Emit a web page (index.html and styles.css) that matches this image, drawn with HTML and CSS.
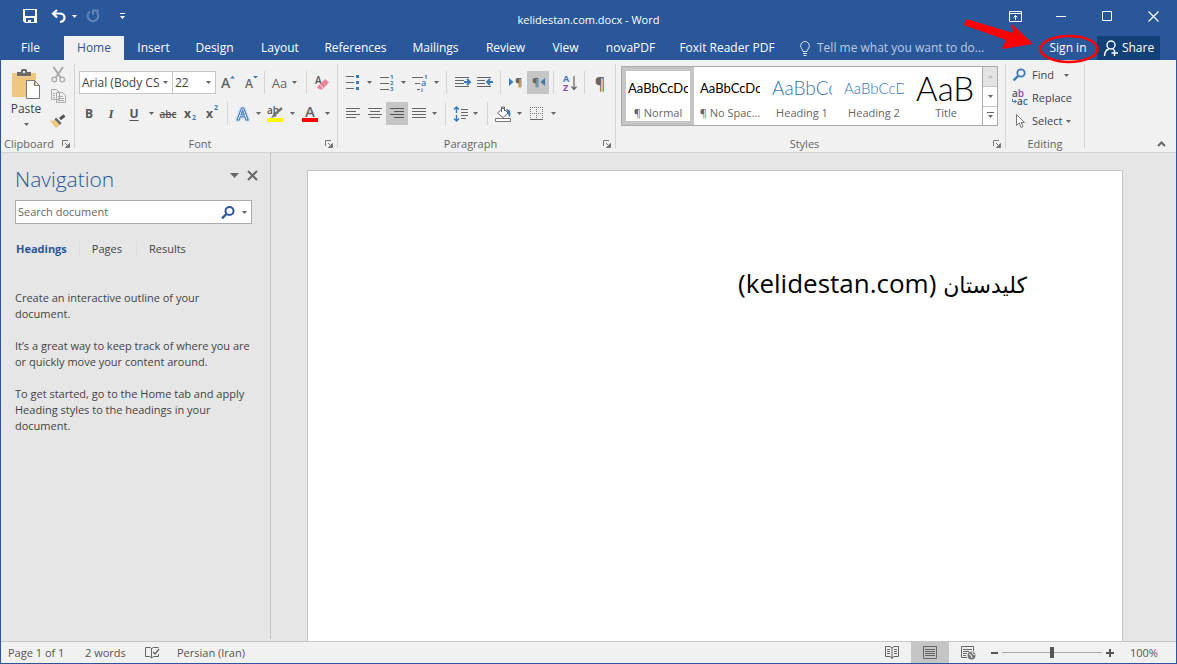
FILE: index.html
```html
<!DOCTYPE html>
<html lang="en">
<head>
<meta charset="utf-8">
<title>kelidestan.com.docx - Word</title>
<link rel="stylesheet" href="styles.css">
</head>
<body>
<svg class="defs" aria-hidden="true">
  <symbol id="down" viewBox="0 0 5 3"><path d="M0 0h5L2.500 3z" fill="currentColor"/></symbol>
  <symbol id="launch" viewBox="0 0 8 8"><path d="M.5 6V.5H6M3 3l3 3M7.500 3.500v4h-4z" fill="none" stroke="#777"/><path d="M7.500 3.500v4h-4z" fill="#777"/></symbol>
</svg>
<div class="window">
  <header class="chrome">
    <div class="titlebar">
      <div class="quick">
        <button aria-label="Save"><svg width="14" height="14" viewBox="0 0 14 14"><path d="M0 0h14v14H2l-2-2z" fill="#fff"/><path d="M2 1h10v6H2zM3 9h8v4H8v-2H5v2H3z" fill="#2a579a"/></svg></button>
        <button aria-label="Undo"><svg width="16" height="14" viewBox="0 0 16 14"><path d="M6 1L2 4.500l4 4M2 4.500h6.500c3 0 5 1.800 5 4.200 0 2.300-1.700 3.800-4.500 4.300" fill="none" stroke="#fff" stroke-width="2.200"/></svg></button>
        <button aria-label="Undo list"><svg width="5" height="3"><use href="#down"/></svg></button>
        <button class="off" aria-label="Redo"><svg width="14" height="14" viewBox="0 0 14 14"><path d="M4 2.500A5.300 5.300 0 1 0 10.500 3M7 6V1.500h6" fill="none" stroke="#6084b8" stroke-width="2"/></svg></button>
        <button aria-label="Customize Quick Access Toolbar"><svg width="5" height="6" viewBox="0 0 5 6"><path d="M0 0h5v1H0zM0 3h5L2.500 6z" fill="#fff"/></svg></button>
      </div>
      <div class="title">kelidestan.com.docx - Word</div>
      <div class="controls">
        <button aria-label="Ribbon Display Options"><svg width="13" height="11" viewBox="0 0 13 11"><path d="M.5.5h12v10H.5zM0 2.500h13M6.500 9V4.500M4.500 6.500l2-2 2 2" fill="none" stroke="#fff"/></svg></button>
        <button aria-label="Minimize"><svg width="10" height="10"><path d="M0 5.500h10" stroke="#fff"/></svg></button>
        <button aria-label="Maximize"><svg width="10" height="10"><path d="M.5.5h9v9h-9z" fill="none" stroke="#fff"/></svg></button>
        <button aria-label="Close"><svg width="11" height="11"><path d="M.5.5l10 10M10.500.5l-10 10" stroke="#fff" stroke-width="1.200"/></svg></button>
      </div>
    </div>
    <div class="tabbar">
      <nav class="tabs">
        <button>File</button><button class="active">Home</button><button>Insert</button><button>Design</button><button>Layout</button><button>References</button><button>Mailings</button><button>Review</button><button>View</button><button>novaPDF</button><button>Foxit Reader PDF</button>
      </nav>
      <button class="tell"><svg width="10" height="15" viewBox="0 0 10 15"><path d="M3 10.500C3 8.500.7 7.500.7 4.800a4.300 4.300 0 0 1 8.600 0C9.300 7.500 7 8.500 7 10.500zM3 12.500h4M3.500 14.500h3" fill="none" stroke="#dbe4f1"/></svg>Tell me what you want to do...</button>
      <div class="account">
        <button>Sign in</button>
        <button class="share"><svg width="16" height="17" viewBox="0 0 16 17"><circle cx="8" cy="5" r="4" fill="none" stroke="#fff" stroke-width="1.400"/><path d="M1.500 16c.3-4 2-6.500 4.500-7M10 9l1 1M11.500 10v6M8.500 13h6.500" fill="none" stroke="#fff" stroke-width="1.400"/></svg>Share</button>
      </div>
    </div>
  </header>

  <div class="ribbon">
    <section class="group clipboard">
      <div class="clip">
        <button class="paste"><svg width="28" height="32" viewBox="0 0 28 32"><path d="M0 4h24v24H0z" fill="#edc87e"/><path d="M5 7V3h4V1.500A1.500 1.500 0 0 1 10.500 0h3A1.500 1.500 0 0 1 15 1.500V3h4v4z" fill="#6b6b6b"/><path d="M11 2h2v2h-2z" fill="#f1f1f1"/><path d="M14.500 11.500h8l5 5v13h-13zM22.500 11.500v5h5" fill="#fff" stroke="#777"/></svg>Paste<svg width="5" height="3"><use href="#down"/></svg></button>
        <div class="clipside">
          <button aria-label="Cut"><svg width="15" height="16" viewBox="0 0 15 16"><path d="M2.500 0l7.500 11M12 0L4.500 11" stroke="#aaa" stroke-width="2"/><circle cx="3.300" cy="12.500" r="2.300" fill="none" stroke="#aaa" stroke-width="1.300"/><circle cx="11.200" cy="12.500" r="2.300" fill="none" stroke="#aaa" stroke-width="1.300"/></svg></button>
          <button aria-label="Copy"><svg width="15" height="14" viewBox="0 0 15 14"><path d="M.5.5h5l3 3v7h-8zM5.500 3.500h6l3 3v7h-9z" fill="#f1f1f1" stroke="#aaa"/><path d="M2 4.500h2M2 6.500h2M2 8.500h2M7 7.500h5M7 9.500h6M7 11.500h6" stroke="#aaa"/></svg></button>
          <button aria-label="Format Painter"><svg width="16" height="14" viewBox="0 0 16 14"><path d="M0 7l5-1 5 5-4 3z" fill="#edc87e"/><path d="M6 3.500l5.500 5.500-1.500 2L4.500 5.500z" fill="#666"/><path d="M10 5l4.500-3.500" stroke="#555" stroke-width="3"/></svg></button>
        </div>
      </div>
      <div class="foot"><span>Clipboard</span><button aria-label="Clipboard options"><svg width="8" height="8"><use href="#launch"/></svg></button></div>
    </section>

    <section class="group font">
      <div class="rows">
        <div class="row font1">
          <label class="combo"><select aria-label="Font"><option>Arial (Body CS)</option></select><svg width="5" height="3"><use href="#down"/></svg></label>
          <label class="combo second"><select aria-label="Font size"><option>22</option></select><svg width="5" height="3"><use href="#down"/></svg></label>
          <button aria-label="Grow font"><svg width="14" height="16" viewBox="0 0 14 16"><text x="0" y="13" class="g14">A</text><path d="M9 3.500h5L11.500 1z" fill="#3b78b8"/></svg></button>
          <button aria-label="Shrink font"><svg width="14" height="16" viewBox="0 0 14 16"><text x="1" y="13" class="g12">A</text><path d="M9 1h5l-2.500 2.500z" fill="#3b78b8"/></svg></button>
          <i></i>
          <button class="aa">Aa<svg width="5" height="3"><use href="#down"/></svg></button>
          <i></i>
          <button aria-label="Clear formatting"><svg width="16" height="16" viewBox="0 0 16 16"><text x="1" y="9" class="g11">A</text><path d="M4 11l7-7 4 3.500-7 7H6l-3-2z" fill="#e9889a"/><path d="M5.500 9.500l4 4" stroke="#f8d4da"/></svg></button>
        </div>
        <div class="row font2">
          <button class="b">B</button><button class="it">I</button><button class="u">U</button>
          <button aria-label="Underline style"><svg width="5" height="3"><use href="#down"/></svg></button>
          <button class="s">abc</button>
          <button class="b" aria-label="Subscript">x<sub>2</sub></button>
          <button class="b" aria-label="Superscript">x<sup>2</sup></button>
          <i></i>
          <button aria-label="Text effects"><svg width="16" height="16" viewBox="0 0 16 16"><text x="2" y="14" class="effect">A</text></svg></button>
          <button aria-label="Text effects list"><svg width="5" height="3"><use href="#down"/></svg></button>
          <button aria-label="Highlight"><svg width="16" height="18" viewBox="0 0 16 18"><text x="0" y="9" class="g11">ab</text><path d="M15 3L7 10" stroke="#777" stroke-width="2.500"/><path d="M7 8l3 3-6 2z" fill="#777"/><path d="M0 13h16v4H0z" fill="#ff0"/></svg></button>
          <button aria-label="Highlight list"><svg width="5" height="3"><use href="#down"/></svg></button>
          <button aria-label="Font color"><svg width="16" height="18" viewBox="0 0 16 18"><text x="3" y="12" class="g15">A</text><path d="M0 13h16v4H0z" fill="red"/></svg></button>
          <button aria-label="Font color list"><svg width="5" height="3"><use href="#down"/></svg></button>
        </div>
      </div>
      <div class="foot"><span>Font</span><button aria-label="Font options"><svg width="8" height="8"><use href="#launch"/></svg></button></div>
    </section>

    <section class="group para">
      <div class="rows">
        <div class="row para1">
          <button aria-label="Bullets"><svg width="14" height="15" viewBox="0 0 14 15"><path d="M0 1.500h8M0 7.500h8M0 13.500h8" stroke="#666"/><path d="M10 0h3v3h-3zM10 6h3v3h-3zM10 12h3v3h-3z" fill="#3b78b8"/></svg></button>
          <button aria-label="Bullets list"><svg width="5" height="3"><use href="#down"/></svg></button>
          <button aria-label="Numbering"><svg width="14" height="16" viewBox="0 0 14 16"><path d="M0 2.500h9M0 8.500h9M0 14.500h9" stroke="#666"/><text x="10" y="4" class="n">1</text><text x="10" y="10" class="n">2</text><text x="10" y="16" class="n">3</text></svg></button>
          <button aria-label="Numbering list"><svg width="5" height="3"><use href="#down"/></svg></button>
          <button aria-label="Multilevel list"><svg width="16" height="16" viewBox="0 0 16 16"><path d="M0 2.500h11M3 8.500h5M5 14.500h3" stroke="#666"/><text x="12" y="4" class="n">1</text><text x="9" y="11" class="m">a</text><text x="9" y="17" class="n">i</text></svg></button>
          <button aria-label="Multilevel choices"><svg width="5" height="3"><use href="#down"/></svg></button>
          <i></i>
          <button aria-label="Decrease indent"><svg width="16" height="11" viewBox="0 0 16 11"><path d="M0 .5h14M0 3.500h9M0 6.500h9M0 9.500h14" stroke="#666"/><path d="M9 5h6M12 2l3 3-3 3" fill="none" stroke="#3b78b8" stroke-width="1.800"/></svg></button>
          <button aria-label="Increase indent"><svg width="16" height="11" viewBox="0 0 16 11"><path d="M0 .5h14M0 3.500h8M0 6.500h8M0 9.500h14" stroke="#666"/><path d="M10 5h6M13 2l-3 3 3 3" fill="none" stroke="#3b78b8" stroke-width="1.800"/></svg></button>
          <i></i>
          <button aria-label="Left to right"><svg width="13" height="9" viewBox="0 0 13 9"><path d="M0 0v8l4.500-4z" fill="#3b78b8"/><text x="6" y="8" class="p11">¶</text></svg></button>
          <button class="on" aria-label="Right to left"><svg width="13" height="9" viewBox="0 0 13 9"><path d="M13 0v8L8.500 4z" fill="#3b78b8"/><text x="0" y="8" class="p11">¶</text></svg></button>
          <i></i>
          <button aria-label="Sort"><svg width="14" height="16" viewBox="0 0 14 16"><text x="0" y="7" class="sa">A</text><text x="0" y="16" class="sz">Z</text><path d="M11 1v13M8.500 11.500l2.500 3 2.500-3" fill="none" stroke="#666" stroke-width="1.200"/></svg></button>
          <i></i>
          <button aria-label="Show marks" class="mark">¶</button>
        </div>
        <div class="row para2">
          <button aria-label="Align left"><svg width="14" height="11"><path d="M0 .5h14M0 3.500h10M0 6.500h14M0 9.500h10" stroke="#666"/></svg></button>
          <button aria-label="Center"><svg width="14" height="11"><path d="M0 .5h14M2 3.500h10M0 6.500h14M2 9.500h10" stroke="#666"/></svg></button>
          <button class="on" aria-label="Align right"><svg width="14" height="11"><path d="M0 .5h14M4 3.500h10M0 6.500h14M4 9.500h10" stroke="#555"/></svg></button>
          <button aria-label="Justify"><svg width="14" height="11"><path d="M0 .5h14M0 3.500h14M0 6.500h14M0 9.500h14" stroke="#666"/></svg></button>
          <button aria-label="Justify list"><svg width="5" height="3"><use href="#down"/></svg></button>
          <i></i>
          <button aria-label="Line spacing"><svg width="14" height="16" viewBox="0 0 14 16"><path d="M2.500 1v6M2.500 9v6M0 3.500L2.500 1 5 3.500M0 12.500L2.500 15 5 12.500" fill="none" stroke="#3b78b8" stroke-width="1.400"/><path d="M7 3.500h7M7 6.500h7M7 9.500h7M7 12.500h5" stroke="#666"/></svg></button>
          <button aria-label="Line spacing list"><svg width="5" height="3"><use href="#down"/></svg></button>
          <i></i>
          <button aria-label="Shading"><svg width="17" height="16" viewBox="0 0 17 16"><path d="M2.500 7L8 2l5 5-5 4.500zM6.500 6V1h3v4" fill="#fff" stroke="#666"/><path d="M11 3c4 0 5 3 4 8-1-1-2-2-2-4z" fill="#3b78b8"/><path d="M.5 12.500h15v3H.5z" fill="#fff" stroke="#777"/></svg></button>
          <button aria-label="Shading list"><svg width="5" height="3"><use href="#down"/></svg></button>
          <button aria-label="Borders"><svg width="13" height="13" viewBox="0 0 13 13"><path d="M0 .5h13M0 6.500h13M.5 0v13M6.500 0v13M12.500 0v13" stroke="#777" stroke-dasharray="1 1"/><path d="M0 12.500h13" stroke="#666"/></svg></button>
          <button aria-label="Borders list"><svg width="5" height="3"><use href="#down"/></svg></button>
        </div>
      </div>
      <div class="foot"><span>Paragraph</span><button aria-label="Paragraph options"><svg width="8" height="8"><use href="#launch"/></svg></button></div>
    </section>

    <section class="group styles">
      <div class="gallery">
        <button class="style chosen"><span class="preview">AaBbCcDc</span><span>¶ Normal</span></button>
        <button class="style"><span class="preview">AaBbCcDc</span><span>¶ No Spac...</span></button>
        <button class="style"><span class="preview h1">AaBbCc</span><span>Heading 1</span></button>
        <button class="style"><span class="preview h2">AaBbCcD</span><span>Heading 2</span></button>
        <button class="style"><span class="preview tt">AaB</span><span>Title</span></button>
        <div class="scroll">
          <button class="dim" aria-label="Previous styles"><svg width="5" height="3"><path d="M0 3h5L2.500 0z" fill="#bbb"/></svg></button>
          <button aria-label="Next styles"><svg width="5" height="3"><use href="#down"/></svg></button>
          <button aria-label="More styles"><svg width="7" height="7" viewBox="0 0 7 7"><path d="M0 0h7v1H0zM1 3h5L3.500 6z" fill="#666"/></svg></button>
        </div>
      </div>
      <div class="foot"><span>Styles</span><button aria-label="Style options"><svg width="8" height="8"><use href="#launch"/></svg></button></div>
    </section>

    <section class="group editing">
      <div class="edits">
        <button><svg width="16" height="14" viewBox="0 0 16 14"><circle cx="9" cy="5" r="3.700" fill="none" stroke="#3b78b8" stroke-width="1.800"/><path d="M6 8l-4.500 4.500" stroke="#3b78b8" stroke-width="2.400"/></svg>Find<svg class="far" width="5" height="3"><use href="#down"/></svg></button>
        <button><svg width="16" height="16" viewBox="0 0 16 16"><text x="0" y="7" class="r">a<tspan fill="#8a4fb0">b</tspan></text><text x="5" y="15" class="r">a<tspan fill="#3b78b8">c</tspan></text><path d="M.5 9v2.500H4M2.500 10l2 1.500-2 1.500" fill="none" stroke="#3b78b8"/></svg>Replace</button>
        <button><svg width="16" height="16" viewBox="0 0 16 16"><path d="M4.500 1.500v11l2.700-2.600L9 14.500l2-.8L9.200 9.500h3.300z" fill="#fff" stroke="#777"/></svg>Select<svg width="5" height="3"><use href="#down"/></svg></button>
      </div>
      <div class="foot"><span>Editing</span></div>
    </section>
    <button class="collapse" aria-label="Collapse the Ribbon"><svg width="9" height="6"><path d="M1 5l3.500-3.500L8 5" fill="none" stroke="#666" stroke-width="2"/></svg></button>
  </div>

  <main class="work">
    <aside class="nav">
      <div class="navhead"><h2>Navigation</h2>
        <button aria-label="Task pane options"><svg width="9" height="5" viewBox="0 0 9 5"><path d="M0 0h9L4.500 5z" fill="#666"/></svg></button>
        <button aria-label="Close pane"><svg width="11" height="11"><path d="M1 1l9 9M10 1l-9 9" stroke="#666" stroke-width="2"/></svg></button>
      </div>
      <div class="search"><input type="text" aria-label="Search document" placeholder="Search document">
        <button aria-label="Search"><svg width="14" height="13" viewBox="0 0 14 13"><circle cx="8.500" cy="5" r="4" fill="none" stroke="#2a579a" stroke-width="2"/><path d="M5.500 8L1 12.300" stroke="#2a579a" stroke-width="2.400"/></svg></button>
        <button aria-label="Search options"><svg width="5" height="3"><use href="#down"/></svg></button>
      </div>
      <div class="navtabs"><button class="cur">Headings</button><button>Pages</button><button>Results</button></div>
      <p>Create an interactive outline of your<br>document.</p>
      <p>It’s a great way to keep track of where you are<br>or quickly move your content around.</p>
      <p>To get started, go to the Home tab and apply<br>Heading styles to the headings in your<br>document.</p>
    </aside>
    <div class="canvas">
      <article class="page" dir="rtl" lang="fa"><p><span class="fa">کلیدستان</span> <bdi class="lat">(kelidestan.com)</bdi></p></article>
    </div>
  </main>

  <footer class="status">
    <span class="pages">Page 1 of 1</span><span class="words">2 words</span>
    <button class="proof" aria-label="Proofing"><svg width="15" height="13" viewBox="0 0 15 13"><path d="M6.500 2.500L5 1.500H.5v9H5l1.500 1.500V2.500L8.500 1.500h5M13.500 8v2.500H8.500L6.500 12" fill="none" stroke="#666"/><path d="M8 6l2 2 4-5" fill="none" stroke="#666" stroke-width="1.400"/></svg></button>
    <span>Persian (Iran)</span>
    <div class="views">
      <button aria-label="Read Mode"><svg width="14" height="13" viewBox="0 0 14 13"><path d="M.5.5H5L7 2l2-1.500h4.500v10H9L7 12l-2-1.500H.5zM7 2v11M2 3.500h3M2 5.500h3M2 7.500h3M9 3.500h3M9 5.500h3M9 7.500h3" fill="none" stroke="#666"/></svg></button>
      <button class="on" aria-label="Print Layout"><svg width="14" height="13"><path d="M.5.5h13v12H.5zM2 3.500h10M2 5.500h10M2 7.500h10M2 9.500h10" fill="none" stroke="#666"/></svg></button>
      <button aria-label="Web Layout"><svg width="15" height="14" viewBox="0 0 15 14"><path d="M6 11.500H.5V.5h12V5M2 3.500h9M2 5.500h6M2 7.500h4M2 9.500h3" fill="none" stroke="#666"/><circle cx="10.500" cy="9.500" r="4" fill="#777"/><path d="M8 8l2 1 1 3M11 6l1 2 2 1" stroke="#f1f1f1" fill="none"/></svg></button>
    </div>
    <div class="zoom"><button aria-label="Zoom out"><svg width="7" height="8"><path d="M0 4h7" stroke="#555" stroke-width="2"/></svg></button><input type="range" min="0" max="200" value="100" aria-label="Zoom"><button aria-label="Zoom in"><svg width="8" height="8"><path d="M0 4h8M4 0v8" stroke="#555" stroke-width="2"/></svg></button></div>
    <span class="percent">100%</span>
  </footer>
  <svg class="callout" width="140" height="50" viewBox="0 0 140 50" aria-hidden="true"><ellipse cx="108" cy="33" rx="28.500" ry="13" fill="none" stroke="red" stroke-width="2.500"/><path d="M5.500 3L3 9l42 15-4 9 31-5L51 8l1 9z" fill="red"/></svg>
</div>
</body>
</html>
```
FILE: styles.css
```css
* { box-sizing: border-box; }
body { margin: 0; font: 12px/16px "Open Sans", "Noto Sans", sans-serif; color: #444; }
button, input, select { font: inherit; color: inherit; background: none; border: 0; padding: 0; margin: 0; }
button { display: flex; align-items: center; justify-content: center; white-space: nowrap; }
svg { display: block; flex: none; overflow: visible; }
.defs { position: absolute; width: 0; height: 0; }
.window { position: relative; display: flex; flex-direction: column; height: 100vh; border: 1px solid #2a579a; border-top: 0; background: #e6e6e6; overflow: hidden; }

.chrome { background: #2a579a; color: #fff; }
.titlebar { display: grid; grid-template-columns: 1fr auto 1fr; height: 36px; align-items: start; }
.title { font-size: 11px; padding-top: 12px; }
.quick { display: grid; grid-template-columns: 34px 24px 6px 32px 26px; padding-left: 12px; height: 32px; }
.controls { display: grid; grid-template-columns: repeat(4, 46px); justify-content: end; height: 32px; }
.tabbar { display: flex; height: 24px; }
.tabs { display: grid; grid-template-columns: 63px 60px 59px 63px 68px 83px 77px 63px 57px 73px 120px; }
.tabs button:first-child { padding-right: 4px; }
.tabs .active { background: #f1f1f1; color: #2a579a; }
.tell { gap: 7px; padding-left: 13px; color: #bccbe1; }
.account { display: flex; margin-left: auto; padding-right: 16px; }
.account button { width: 58px; }
.account .share { width: 63px; background: #124078; gap: 3px; }

.ribbon { display: flex; height: 93px; background: #f1f1f1; border-bottom: 1px solid #d2d2d2; font-size: 11px; color: #444; }
.group { display: flex; flex-direction: column; justify-content: space-between; border-right: 1px solid #d4d4d4; margin: 4px 0; flex: none; }
.foot { display: flex; align-items: center; height: 8px; color: #666; padding-right: 4px; }
.foot span { flex: 1; text-align: center; }
.foot button { width: 8px; height: 8px; }
.clipboard { width: 74px; }
.font { width: 263px; }
.para { width: 278px; }
.styles { width: 390px; }
.editing { width: 79px; }
.rows { display: grid; gap: 8px; padding: 7px 0 0 4px; }
.row { display: grid; height: 23px; }
.row i { width: 1px; background: #d4d4d4; justify-self: center; }
.row use, .combo use, .edits use, .paste use, .search use { color: #666; }
.font1 { grid-template-columns: 94px 43px 24px 22px 5px 35px 9px 22px; }
.font2 { grid-template-columns: 20px 24px 22px 12px 22px 22px 22px 8px 24px 6px 28px 6px 29px 6px; }
.para1 { grid-template-columns: 22px 10px 25px 8px 26px 6px 15px 18px 26px 5px 24px 22px 9px 24px 5px 26px; }
.para2 { grid-template-columns: 22px 22px 22px 22px 8px 15px 16px 13px 11px 21px 10px 25px 8px; }
.on { background: #c5c5c5; }
.combo { display: flex; align-items: center; background: #fff; border: 1px solid #c6c6c6; padding: 0 4px 0 2px; min-width: 0; font-size: 12px; }
.combo.second { border-left: 0; }
.combo select { appearance: none; flex: 1; min-width: 0; width: 0; height: 21px; margin-right: 4px; overflow: hidden; text-overflow: clip; }
.aa { gap: 5px; font-size: 13px; color: #666; }
.b { font-weight: 700; font-size: 12px; color: #555; }
.it { font: italic 700 13px "Liberation Serif", serif; color: #555; }
.u { font-weight: 700; font-size: 12px; text-decoration: underline; text-underline-offset: 2px; color: #555; }
.s { font-size: 10px; font-weight: 600; text-decoration: line-through; color: #555; }
sub, sup { font-size: 7px; line-height: 8px; color: #3b78b8; padding-left: 1px; }
sub { align-self: end; margin-bottom: 3px; }
sup { align-self: start; margin-top: 2px; }
.g15 { font-size: 15px; font-weight: 600; fill: #666; }
.g14 { font-size: 14px; font-weight: 600; fill: #666; }
.g12 { font-size: 12px; font-weight: 600; fill: #666; }
.g11 { font-size: 10px; font-weight: 600; fill: #555; }
.n { font-size: 6px; font-weight: 700; fill: #3b78b8; }
.m { font-size: 9px; font-weight: 600; fill: #3b78b8; }
.p11 { font-size: 11px; font-weight: 700; fill: #666; }
.mark { font-size: 16px; font-weight: 600; color: #666; }
.sa { font-size: 9px; font-weight: 700; fill: #3b78b8; }
.sz { font-size: 9px; font-weight: 700; fill: #8a4fb0; }
.r { font-size: 10px; font-weight: 600; fill: #555; }
.effect { font-size: 17px; font-weight: 600; fill: #fff; stroke: #3b78b8; stroke-width: 1px; filter: drop-shadow(0 0 1px #8fb4dc); }

.clip { display: flex; padding: 3px 0 0 8px; }
.paste { flex-direction: column; justify-content: start; width: 34px; font-size: 12px; padding-top: 2px; }
.paste svg:last-child { margin-top: 6px; }
.clipside { display: grid; grid-template-rows: 16px 24px 23px; gap: 1px; width: 30px; }
.clipboard .foot span { text-align: left; padding-left: 3px; }

.gallery { display: grid; grid-template-columns: repeat(5, 72px) 1fr; height: 60px; margin: 2px 7px 0 5px; border: 1px solid #ababab; background: #fff; }
.style { flex-direction: column; justify-content: space-between; border: 4px solid #fff; overflow: hidden; color: #666; }
.chosen { border-color: #c5c5c5; }
.preview { display: flex; align-items: center; width: 60px; height: 34px; overflow: hidden; font: 13px/34px Lato, sans-serif; color: #000; }
.h1 { font-size: 19px; font-weight: 300; color: #2e74b5; }
.h2 { font-size: 15px; font-weight: 300; color: #2e74b5; }
.tt { font-size: 33px; font-weight: 300; line-height: 24px; }
.scroll { display: grid; grid-template-rows: repeat(3, 1fr); border-left: 1px solid #ababab; background: #fff; }
.scroll button + button { border-top: 1px solid #c6c6c6; }
.scroll .dim { background: #e3e3e3; }
.scroll use { color: #666; }

.edits { display: grid; grid-template-rows: repeat(3, 23px); padding-left: 6px; height: 68px; }
.edits button { justify-content: start; gap: 4px; height: 22px; }
.edits .far { margin-left: 6px; }
.editing .foot { padding-right: 0; }
.collapse { margin: auto 10px 5px auto; width: 9px; height: 6px; }

.work { display: flex; flex: 1; min-height: 0; }
.nav { width: 270px; border-right: 1px solid #c6c6c6; padding: 14px 14px 0; margin-bottom: 2px; font-size: 11px; flex: none; }
.navhead { display: flex; align-items: center; height: 24px; gap: 8px; margin-right: -2px; }
.navhead button { height: 16px; margin-bottom: 7px; }
.navhead h2 { flex: 1; margin: 0; font-size: 21px; line-height: 24px; font-weight: 300; color: #2a579a; }
.search { display: flex; width: 237px; height: 24px; margin-top: 9px; background: #fff; border: 1px solid #ababab; }
.search input { flex: 1; min-width: 0; padding: 0 2px; outline: 0; }
.search input::placeholder { color: #666; opacity: 1; }
.search button { width: 14px; }
.search button:first-of-type { width: 18px; }
.navtabs { display: flex; margin: 17px 0 33px; }
.navtabs button { padding: 0 14px 0 12px; border-left: 1px solid #dedede; }
.navtabs .cur { padding: 0 12px 0 1px; border: 0; color: #2a579a; font-weight: 700; }
.nav p { margin: 0 0 16px; white-space: nowrap; }
.canvas { display: flex; flex: 1; min-width: 0; padding: 17px 53px 0 36px; }
.page { flex: 1; background: #fff; border: 1px solid #c6c6c6; border-bottom: 0; padding: 94px 95px 0; color: #000; }
.page p { margin: 0; font-size: 26px; line-height: 36px; }
.fa { font-family: "DejaVu Sans", sans-serif; font-size: 22px; }

.status { display: flex; align-items: center; height: 22px; flex: none; background: #f1f1f1; border-top: 1px solid #c6c6c6; padding-left: 7px; font-size: 11px; color: #555; }
.pages { width: 77px; }
.words { width: 59px; }
.proof { width: 17px; margin-right: 16px; }
.views { display: grid; grid-template-columns: repeat(3, 38px); height: 100%; margin-left: auto; }
.zoom { display: flex; align-items: center; gap: 4px; margin-left: 4px; }
.zoom input { appearance: none; width: 100px; height: 12px; background: linear-gradient(#ababab, #ababab) center / 100% 1px no-repeat; }
.zoom input::-webkit-slider-thumb { appearance: none; width: 4px; height: 11px; background: #555; }
.percent { width: 62px; padding-left: 16px; }
.callout { position: absolute; right: 0; top: 0; margin: 16px 75px 0 0; }
```
